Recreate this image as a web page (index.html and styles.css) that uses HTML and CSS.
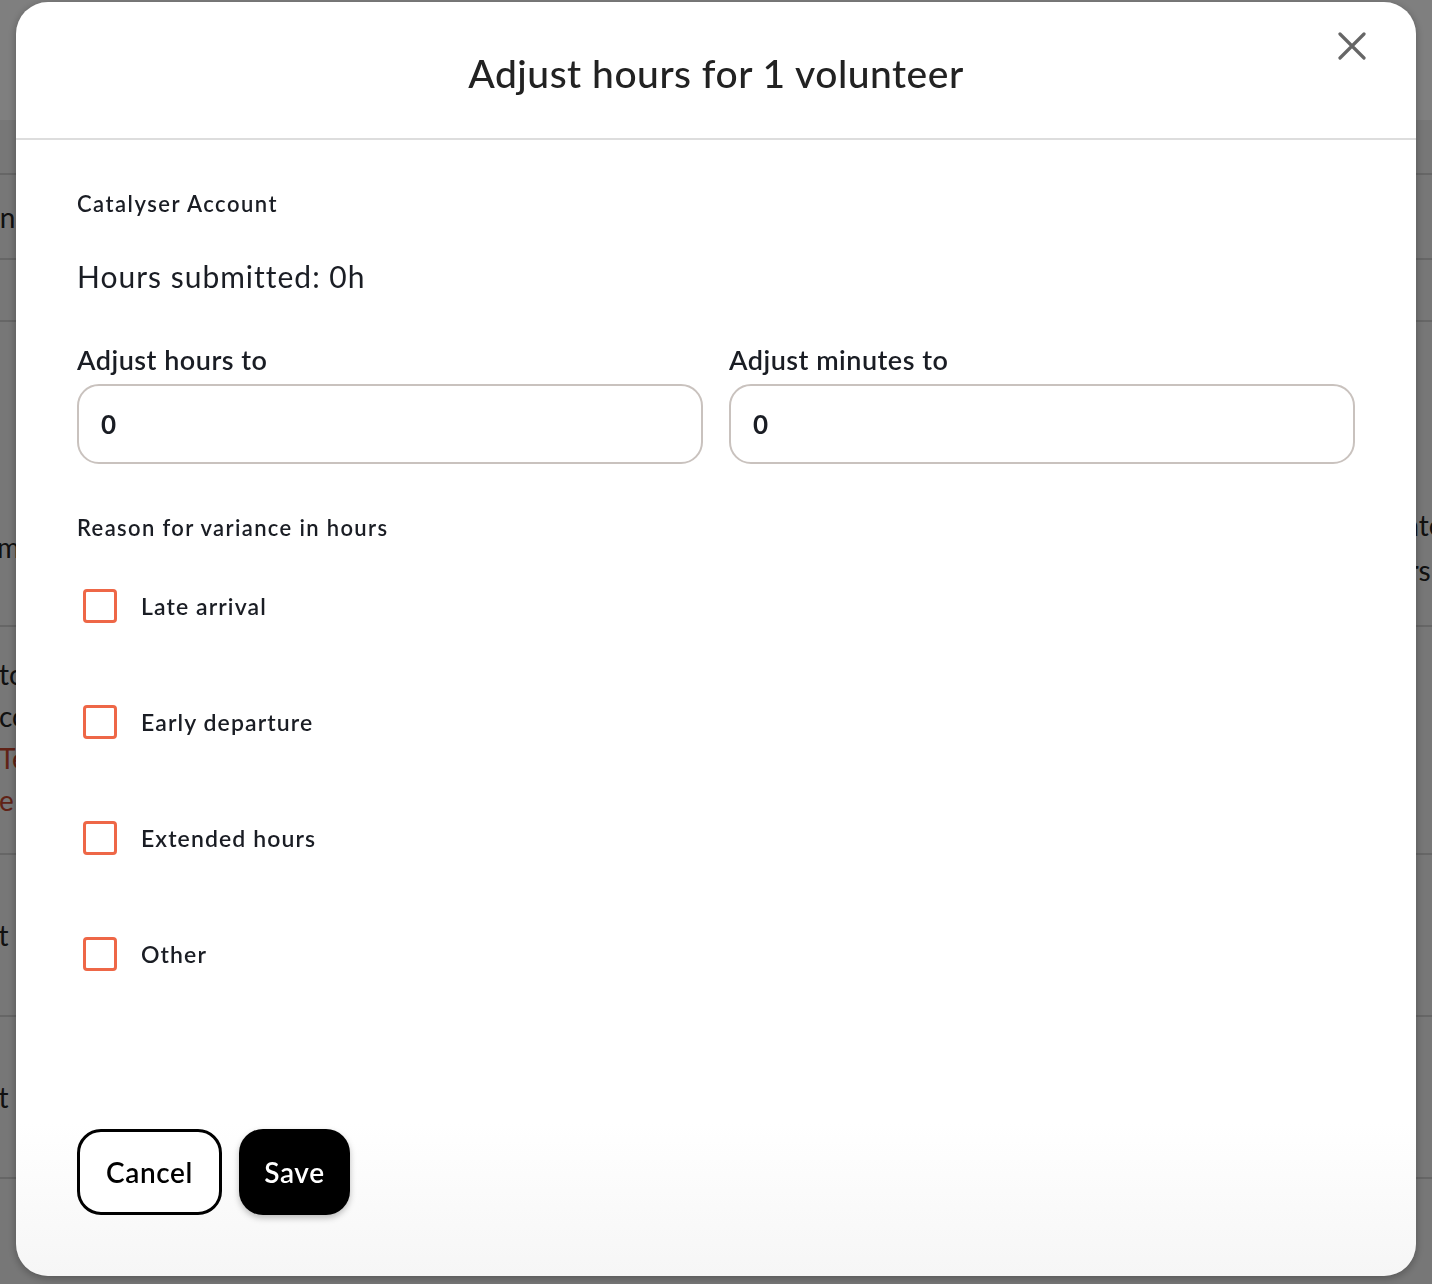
FILE: index.html
```html
<!DOCTYPE html>
<html>
<head>
    <title>Adjust hours</title>
    <link rel="stylesheet" href="styles.css">
</head>
<body>
    <!-- page behind the dialog -->
    <div class="page">
        <div class="page-header"></div>
        <div class="page-row short"></div>
        <div class="page-row mid"><span class="peek p-name">in Smith</span></div>
        <div class="page-row thin"></div>
        <div class="page-row tall">
            <span class="peek p-mail">mail</span>
            <span class="peek p-date">Date</span>
            <span class="peek p-hours">Hours</span>
        </div>
        <div class="page-row big">
            <span class="peek p-notes">to<br>co<br><em>Te</em><br><em>e</em></span>
        </div>
        <div class="page-row med"><span class="peek p-not">Not (</span></div>
        <div class="page-row med"><span class="peek p-not">Not (</span></div>
        <div class="page-row"></div>
    </div>

    <div class="overlay">
        <div class="modal">
            <div class="modal-header">
                <h2>Adjust hours for 1 volunteer</h2>
                <button class="close" aria-label="Close">
                    <svg width="28" height="28" viewBox="0 0 28 28">
                        <path d="M2 2 L26 26 M26 2 L2 26" stroke="#666" stroke-width="3.2" stroke-linecap="round" fill="none"/>
                    </svg>
                </button>
            </div>

            <div class="modal-body">
                <div class="account">Catalyser Account</div>
                <div class="submitted">Hours submitted: 0h</div>

                <div class="fields">
                    <div class="field">
                        <label for="hours">Adjust hours to</label>
                        <input type="text" id="hours" value="0">
                    </div>
                    <div class="field">
                        <label for="minutes">Adjust minutes to</label>
                        <input type="text" id="minutes" value="0">
                    </div>
                </div>

                <div class="reason">Reason for variance in hours</div>
                <div class="options">
                    <label class="option"><span class="box"></span>Late arrival</label>
                    <label class="option"><span class="box"></span>Early departure</label>
                    <label class="option"><span class="box"></span>Extended hours</label>
                    <label class="option"><span class="box"></span>Other</label>
                </div>
            </div>

            <div class="modal-footer">
                <button class="btn btn-cancel">Cancel</button>
                <button class="btn btn-save">Save</button>
            </div>
        </div>
    </div>
</body>
</html>
```

FILE: styles.css
```css
body {
    margin: 0;
    font-family: Lato, "Noto Sans", sans-serif;
    color: #1a1d24;
    height: 1284px;
    overflow: hidden;
}

/* background page */
.page {
    background-color: #eeeeee;
    height: 100%;
}

.page-header {
    height: 120px;
    background-color: #fefefe;
}

.page-row {
    position: relative;
    height: 160px;
    border-bottom: 2px solid #cccccc;
    font-size: 28px;
    line-height: 40px;
    color: #222;
}

.page-row.short { height: 53px; }
.page-row.mid { height: 83px; }
.page-row.thin { height: 60px; }
.page-row.tall { height: 303px; }
.page-row.big { height: 226px; }
.page-row.med { height: 160px; }

.peek {
    position: absolute;
    white-space: nowrap;
}

.p-name { left: -7px; top: 22px; }
.p-mail { left: -3px; top: 205px; }
.p-date { left: 1384px; top: 183px; }
.p-hours { left: 1356px; top: 228px; }
.p-notes { left: -1px; top: 26px; line-height: 42px; }
.p-not { left: -38px; top: 60px; }

.peek em {
    font-style: normal;
    color: #c0452c;
}

/* dialog */
.overlay {
    position: fixed;
    inset: 0;
    background-color: rgba(0, 0, 0, 0.5);
    padding: 2px 16px 8px;
    display: flex;
}

.modal {
    flex: 1;
    display: flex;
    flex-direction: column;
    background: linear-gradient(to bottom, #ffffff 88%, #f6f6f6 100%);
    border-radius: 32px;
    box-shadow: 0 2px 8px rgba(0, 0, 0, 0.3);
}

.modal-header {
    position: relative;
    height: 136px;
    border-bottom: 2px solid #dddddd;
    display: flex;
    align-items: center;
    justify-content: center;
}

.modal-header h2 {
    margin: 6px 0 0;
    font-size: 39px;
    font-weight: 500;
    letter-spacing: 0.5px;
    color: #222;
}

.close {
    position: absolute;
    top: 30px;
    right: 50px;
    padding: 0;
    border: none;
    background: none;
    cursor: pointer;
}

.modal-body {
    flex: 1;
    padding: 0 61px;
}

.account {
    margin-top: 49px;
    font-size: 22px;
    line-height: 30px;
    font-weight: 600;
    letter-spacing: 1.5px;
}

.submitted {
    margin-top: 37px;
    font-size: 30px;
    line-height: 40px;
    letter-spacing: 1px;
}

.fields {
    margin-top: 46px;
    display: flex;
    gap: 26px;
}

.field {
    flex: 1;
}

.field label {
    display: block;
    font-size: 27px;
    line-height: 36px;
    font-weight: 600;
    letter-spacing: 0.5px;
    margin-bottom: 6px;
}

.field input {
    width: 100%;
    height: 80px;
    box-sizing: border-box;
    border: 2px solid #c9c2be;
    border-radius: 22px;
    padding: 0 22px;
    font-family: inherit;
    font-size: 26px;
    font-weight: 700;
    color: #1a1d24;
    outline: none;
}

.reason {
    margin-top: 49px;
    font-size: 22px;
    line-height: 30px;
    font-weight: 600;
    letter-spacing: 1.35px;
}

.options {
    margin-top: 46px;
    display: flex;
    flex-direction: column;
    gap: 82px;
}

.option {
    display: flex;
    align-items: center;
    gap: 24px;
    height: 34px;
    margin-left: 6px;
    font-size: 23px;
    font-weight: 600;
    letter-spacing: 1.1px;
}

.box {
    width: 34px;
    height: 34px;
    box-sizing: border-box;
    border: 3px solid #ee6747;
    border-radius: 4px;
}

.modal-footer {
    display: flex;
    gap: 17px;
    padding: 0 61px 61px;
}

.btn {
    height: 86px;
    border-radius: 24px;
    font-family: inherit;
    font-size: 28px;
    font-weight: 600;
    letter-spacing: 0.6px;
    cursor: pointer;
}

.btn-cancel {
    width: 145px;
    background-color: #fff;
    border: 3px solid #000;
    color: #000;
}

.btn-save {
    width: 111px;
    background-color: #000;
    border: none;
    color: #fff;
    box-shadow: 0 3px 6px rgba(0, 0, 0, 0.25);
}
```
